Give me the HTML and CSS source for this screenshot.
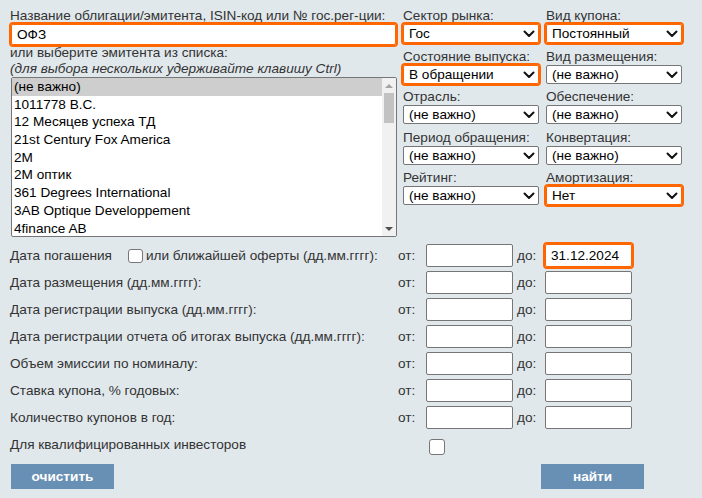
FILE: index.html
```html
<!DOCTYPE html>
<html lang="ru">
<head>
<meta charset="utf-8">
<title>Поиск облигаций</title>
<link rel="stylesheet" href="styles.css">
</head>
<body>
<form class="page">
  <div class="top">
    <div class="left">
      <label class="lbl" for="q">Название облигации/эмитента, ISIN-код или № гос.рег-ции:</label>
      <input id="q" class="txt name hl" type="text" value="ОФЗ">
      <div class="lbl">или выберите эмитента из списка:</div>
      <div class="lbl hint">(для выбора нескольких удерживайте клавишу Ctrl)</div>
      <div class="listbox" role="listbox" aria-multiselectable="true">
        <ul class="options">
          <li class="opt selected">(не важно)</li>
          <li class="opt">1011778 B.C.</li>
          <li class="opt">12 Месяцев успеха ТД</li>
          <li class="opt">21st Century Fox America</li>
          <li class="opt">2M</li>
          <li class="opt">2M оптик</li>
          <li class="opt">361 Degrees International</li>
          <li class="opt">3AB Optique Developpement</li>
          <li class="opt">4finance AB</li>
        </ul>
        <div class="sbar">
          <span class="sb-btn"><span class="tri up"></span></span>
          <span class="sb-thumb"></span>
          <span class="sb-track"></span>
          <span class="sb-btn"><span class="tri down"></span></span>
        </div>
      </div>
    </div>
    <div class="right">
      <div class="field">
        <div class="lbl">Сектор рынка:</div>
        <span class="sel-wrap"><select class="sel hl"><option>Гос</option></select><svg class="chev" viewBox="0 0 12 8"><polyline points="1.5,1.5 6,6 10.5,1.5"/></svg></span>
      </div>
      <div class="field">
        <div class="lbl">Вид купона:</div>
        <span class="sel-wrap"><select class="sel hl"><option>Постоянный</option></select><svg class="chev" viewBox="0 0 12 8"><polyline points="1.5,1.5 6,6 10.5,1.5"/></svg></span>
      </div>
      <div class="field">
        <div class="lbl">Состояние выпуска:</div>
        <span class="sel-wrap"><select class="sel hl"><option>В обращении</option></select><svg class="chev" viewBox="0 0 12 8"><polyline points="1.5,1.5 6,6 10.5,1.5"/></svg></span>
      </div>
      <div class="field">
        <div class="lbl">Вид размещения:</div>
        <span class="sel-wrap"><select class="sel"><option>(не важно)</option></select><svg class="chev" viewBox="0 0 12 8"><polyline points="1.5,1.5 6,6 10.5,1.5"/></svg></span>
      </div>
      <div class="field">
        <div class="lbl">Отрасль:</div>
        <span class="sel-wrap"><select class="sel"><option>(не важно)</option></select><svg class="chev" viewBox="0 0 12 8"><polyline points="1.5,1.5 6,6 10.5,1.5"/></svg></span>
      </div>
      <div class="field">
        <div class="lbl">Обеспечение:</div>
        <span class="sel-wrap"><select class="sel"><option>(не важно)</option></select><svg class="chev" viewBox="0 0 12 8"><polyline points="1.5,1.5 6,6 10.5,1.5"/></svg></span>
      </div>
      <div class="field">
        <div class="lbl">Период обращения:</div>
        <span class="sel-wrap"><select class="sel"><option>(не важно)</option></select><svg class="chev" viewBox="0 0 12 8"><polyline points="1.5,1.5 6,6 10.5,1.5"/></svg></span>
      </div>
      <div class="field">
        <div class="lbl">Конвертация:</div>
        <span class="sel-wrap"><select class="sel"><option>(не важно)</option></select><svg class="chev" viewBox="0 0 12 8"><polyline points="1.5,1.5 6,6 10.5,1.5"/></svg></span>
      </div>
      <div class="field">
        <div class="lbl">Рейтинг:</div>
        <span class="sel-wrap"><select class="sel"><option>(не важно)</option></select><svg class="chev" viewBox="0 0 12 8"><polyline points="1.5,1.5 6,6 10.5,1.5"/></svg></span>
      </div>
      <div class="field">
        <div class="lbl">Амортизация:</div>
        <span class="sel-wrap"><select class="sel hl"><option>Нет</option></select><svg class="chev" viewBox="0 0 12 8"><polyline points="1.5,1.5 6,6 10.5,1.5"/></svg></span>
      </div>
    </div>
  </div>

  <div class="rows">
    <div class="row">
      <span class="rl">Дата погашения <input class="chk chk-sm" type="checkbox"> или ближайшей оферты (дд.мм.гггг):</span>
      <span class="ft">от:</span><input class="txt num" type="text">
      <span class="ft to">до:</span><input class="txt num hl" type="text" value="31.12.2024">
    </div>
    <div class="row">
      <span class="rl">Дата размещения (дд.мм.гггг):</span>
      <span class="ft">от:</span><input class="txt num" type="text">
      <span class="ft to">до:</span><input class="txt num" type="text">
    </div>
    <div class="row">
      <span class="rl">Дата регистрации выпуска (дд.мм.гггг):</span>
      <span class="ft">от:</span><input class="txt num" type="text">
      <span class="ft to">до:</span><input class="txt num" type="text">
    </div>
    <div class="row">
      <span class="rl">Дата регистрации отчета об итогах выпуска (дд.мм.гггг):</span>
      <span class="ft">от:</span><input class="txt num" type="text">
      <span class="ft to">до:</span><input class="txt num" type="text">
    </div>
    <div class="row">
      <span class="rl">Объем эмиссии по номиналу:</span>
      <span class="ft">от:</span><input class="txt num" type="text">
      <span class="ft to">до:</span><input class="txt num" type="text">
    </div>
    <div class="row">
      <span class="rl">Ставка купона, % годовых:</span>
      <span class="ft">от:</span><input class="txt num" type="text">
      <span class="ft to">до:</span><input class="txt num" type="text">
    </div>
    <div class="row">
      <span class="rl">Количество купонов в год:</span>
      <span class="ft">от:</span><input class="txt num" type="text">
      <span class="ft to">до:</span><input class="txt num" type="text">
    </div>
    <div class="row">
      <span class="rl">Для квалифицированных инвесторов</span>
      <span class="ft"></span><span class="chk-cell"><input class="chk" type="checkbox"></span>
    </div>
  </div>

  <div class="actions">
    <button class="btn" type="reset">очистить</button>
    <button class="btn" type="submit">найти</button>
  </div>
</form>
</body>
</html>
```

FILE: styles.css
```css
* { box-sizing: border-box; }

html, body {
  margin: 0;
  background: #e1e8ec;
}

body {
  font-family: "Liberation Sans", Arial, sans-serif;
  font-size: 13.6px;
  color: #333;
}

.page {
  padding: 8px 0 0 10px;
  width: 702px;
  height: 498px;
}

.top {
  display: flex;
}

.left {
  width: 388px;
  display: flex;
  flex-direction: column;
}

.lbl {
  display: block;
  line-height: 16px;
  height: 16px;
  white-space: nowrap;
}

.hint {
  font-style: italic;
}

.txt {
  font-family: inherit;
  font-size: 13.6px;
  color: #000;
  background: #fff;
  border: 1px solid #767676;
  border-radius: 2px;
  padding: 0 5px;
  margin: 0;
}

.hl {
  border-color: #ff6600;
  outline: 2px solid #ff6600;
  outline-offset: 0;
}

.name {
  width: 385px;
  height: 21px;
  margin-left: 1px;
}

.listbox {
  margin-left: 1px;
  width: 386px;
  height: 160px;
  background: #fff;
  border: 1px solid #767676;
  border-radius: 2px;
  display: flex;
  overflow: hidden;
}

.options {
  list-style: none;
  margin: 0;
  padding: 0;
  flex: 1;
  color: #000;
}

.opt {
  height: 17.7px;
  line-height: 17.7px;
  padding: 0 2px;
  white-space: nowrap;
}

.opt.selected {
  background: #cecece;
}

.sbar {
  width: 14px;
  background: #f1f1f1;
  display: flex;
  flex-direction: column;
  align-items: center;
}

.sb-btn {
  height: 15px;
  width: 14px;
  display: flex;
  align-items: center;
  justify-content: center;
}

.sb-thumb {
  width: 10px;
  height: 30px;
  background: #c2c2c2;
}

.sb-track {
  flex: 1;
}

.tri {
  width: 0;
  height: 0;
  border-left: 4px solid transparent;
  border-right: 4px solid transparent;
}

.tri.up { border-bottom: 4px solid #a3a3a3; }
.tri.down { border-top: 4px solid #505050; }

.right {
  margin-left: 5px;
  display: grid;
  grid-template-columns: 136px 136px;
  column-gap: 7px;
  align-content: start;
}

.field {
  display: flex;
  flex-direction: column;
  height: 40.5px;
}

.sel-wrap {
  position: relative;
  display: block;
  width: 136px;
  height: 19px;
}

.sel {
  appearance: none;
  -webkit-appearance: none;
  width: 136px;
  height: 19px;
  font-family: inherit;
  font-size: 13.6px;
  color: #000;
  background: #fff;
  border: 1px solid #767676;
  border-radius: 2px;
  padding: 0 20px 0 5px;
  margin: 0;
}

.sel.hl {
  border-color: #ff6600;
}

.chev {
  position: absolute;
  right: 4px;
  top: 6px;
  width: 12px;
  height: 8px;
  pointer-events: none;
}

.chev polyline {
  fill: none;
  stroke: #111;
  stroke-width: 2;
  stroke-linecap: round;
  stroke-linejoin: round;
}

.rows {
  margin-top: 7px;
  display: flex;
  flex-direction: column;
  row-gap: 4px;
}

.row {
  display: grid;
  grid-template-columns: 388px 28px 87px 32px 87px;
  align-items: center;
  height: 23px;
}

.rl {
  display: flex;
  align-items: center;
  white-space: nowrap;
}

.ft {
  white-space: nowrap;
}

.ft.to {
  padding-left: 4px;
}

.num {
  width: 87px;
  height: 23px;
}

.chk {
  appearance: none;
  -webkit-appearance: none;
  width: 16px;
  height: 16px;
  margin: 0;
  background: #fff;
  border: 1px solid #767676;
  border-radius: 3px;
}

.chk-sm {
  width: 15px;
  height: 14px;
  margin: 0 3px 0 16px;
}

.chk-cell {
  display: flex;
  padding-left: 3px;
  padding-top: 4px;
}

.actions {
  margin-top: 8px;
  width: 634px;
  padding-left: 1px;
  display: flex;
  justify-content: space-between;
}

.btn {
  width: 103px;
  height: 25px;
  background: #6890b4;
  color: #fff;
  border: 0;
  font-family: inherit;
  font-size: 13.6px;
  font-weight: bold;
  padding: 0;
  margin: 0;
}
```
